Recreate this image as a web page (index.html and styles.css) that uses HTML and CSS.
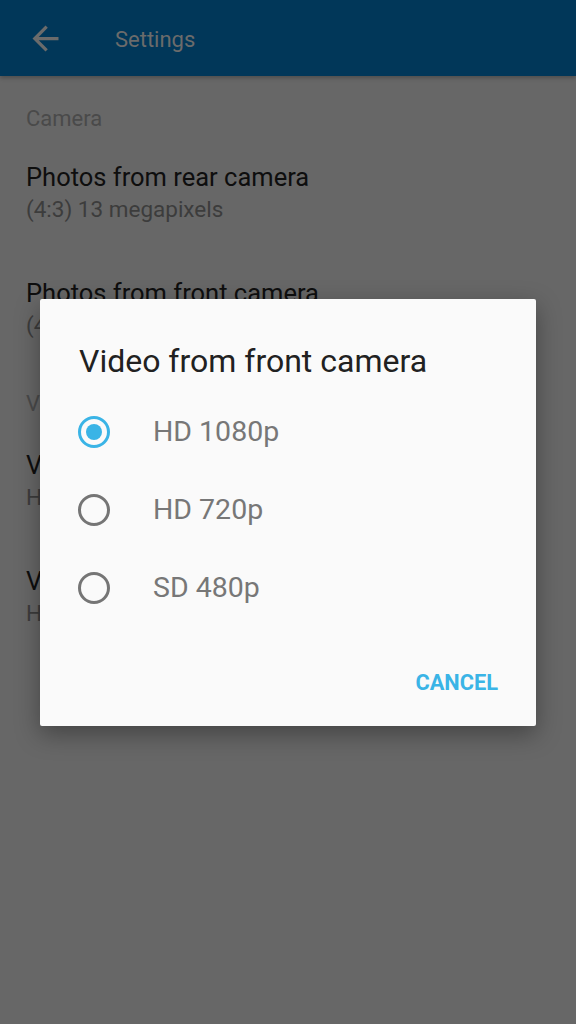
FILE: index.html
```html
<!DOCTYPE html>
<html>
<head>
<meta charset="utf-8">
<link rel="stylesheet" href="styles.css">
</head>
<body>
<div class="screen">
  <header class="appbar">
    <svg class="back" width="39" height="39" viewBox="0 0 24 24"><path d="M20 11H7.83l5.59-5.59L12 4l-8 8 8 8 1.41-1.41L7.83 13H20v-2z" fill="#6b6b6b"/></svg>
    <span class="appbar-title">Settings</span>
  </header>
  <main class="list">
    <div class="category">Camera</div>
    <div class="item">
      <div class="item-title">Photos from rear camera</div>
      <div class="item-sub">(4:3) 13 megapixels</div>
    </div>
    <div class="item">
      <div class="item-title">Photos from front camera</div>
      <div class="item-sub">(4:3) 5 megapixels</div>
    </div>
    <div class="category cat2">Video</div>
    <div class="item">
      <div class="item-title">Video from rear camera</div>
      <div class="item-sub">HD 1080p</div>
    </div>
    <div class="item">
      <div class="item-title">Video from front camera</div>
      <div class="item-sub">HD 1080p</div>
    </div>
  </main>
  <div class="overlay">
    <div class="dialog">
      <div class="dialog-title">Video from front camera</div>
      <div class="options">
        <div class="option"><span class="radio checked"></span><span class="label">HD 1080p</span></div>
        <div class="option"><span class="radio"></span><span class="label">HD 720p</span></div>
        <div class="option"><span class="radio"></span><span class="label">SD 480p</span></div>
      </div>
      <div class="actions"><span class="btn">CANCEL</span></div>
    </div>
  </div>
</div>
</body>
</html>
```
FILE: styles.css
```css
* { box-sizing: border-box; }
html, body { margin: 0; padding: 0; }
body { font-family: Roboto, "Noto Sans", sans-serif; background: #676767; }
.screen { position: relative; width: 576px; height: 1024px; overflow: hidden; background: #676767; }
.appbar {
  height: 76px; background: #013759; display: flex; align-items: center;
  padding-left: 26px; box-shadow: 0 2px 4px rgba(0,0,0,0.25);
}
.back { display: block; flex: none; }
.appbar-title { margin-left: 50px; font-size: 22px; line-height: 28px; color: #6b6b6b; padding-top: 3px; }
.list { padding: 0 26px; }
.category { font-size: 22px; color: #4a4a4a; margin-top: 29px; line-height: 28px; }
.item { margin-top: 28px; }
.item + .item { margin-top: 52px; }
.cat2 { margin-top: 49px; }
.cat2 + .item { margin-top: 31px; }
.item-title { font-size: 25.5px; color: #0e0e0e; line-height: 32px; }
.item-sub { font-size: 22.5px; color: #3c3c3c; line-height: 32px; }
.overlay {
  position: absolute; inset: 0; display: flex; align-items: center; justify-content: center;
}
.dialog {
  width: 496px; height: 427px; background: #fafafa; border-radius: 2px;
  box-shadow: 0 8px 24px rgba(0,0,0,0.35); padding: 42px 0 0 38px;
  display: flex; flex-direction: column;
}
.dialog-title { font-size: 32px; color: #212121; line-height: 40px; margin-left: 1px; }
.options { margin-top: 35px; display: flex; flex-direction: column; gap: 46px; }
.option { display: flex; align-items: center; height: 32px; }
.radio {
  width: 32px; height: 32px; border-radius: 50%; border: 3px solid #757575;
  display: flex; align-items: center; justify-content: center; flex: none;
}
.radio.checked { border-color: #3ab4e6; }
.radio.checked::after { content: ""; width: 16px; height: 16px; border-radius: 50%; background: #3ab4e6; }
.label { margin-left: 43px; font-size: 28.5px; line-height: 36px; color: #777777; }
.actions { margin-top: auto; display: flex; justify-content: flex-end; padding: 0 38px 31px 0; }
.btn { font-size: 21.8px; line-height: 24px; font-weight: 700; color: #3ab4e6; }
```
